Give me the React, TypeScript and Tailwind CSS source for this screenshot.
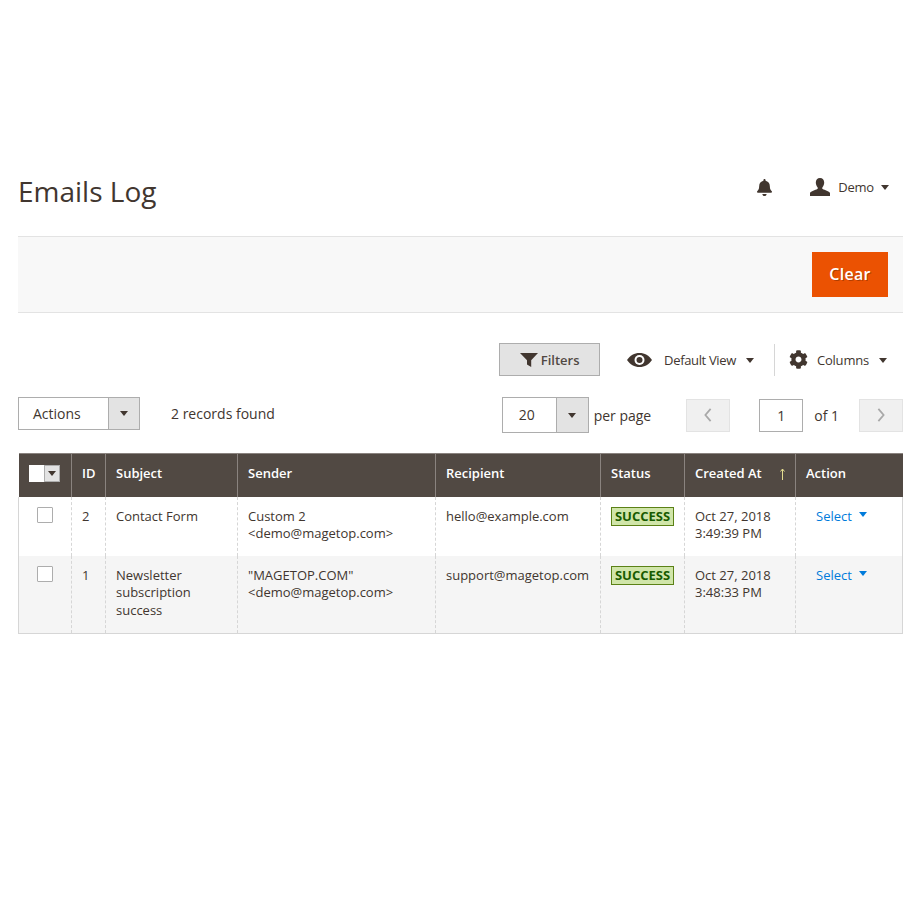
import { FaBell, FaCog } from "react-icons/fa";

type Row = {
  id: number;
  subject: string[];
  sender: string[];
  recipient: string;
  date: string;
  time: string;
  striped: boolean;
};

const rows: Row[] = [
  {
    id: 2,
    subject: ["Contact Form"],
    sender: ["Custom 2", "<demo@magetop.com>"],
    recipient: "hello@example.com",
    date: "Oct 27, 2018",
    time: "3:49:39 PM",
    striped: false,
  },
  {
    id: 1,
    subject: ["Newsletter", "subscription", "success"],
    sender: ['"MAGETOP.COM"', "<demo@magetop.com>"],
    recipient: "support@magetop.com",
    date: "Oct 27, 2018",
    time: "3:48:33 PM",
    striped: true,
  },
];

function Caret({ className }: { className: string }) {
  return (
    <svg viewBox="0 0 8 5" className={className} fill="currentColor">
      <path d="M0 0h8L4 5z" />
    </svg>
  );
}

function UserIcon() {
  return (
    <svg viewBox="0 0 20 18" className="h-[18px] w-5 text-[#41362f]" fill="currentColor">
      <path d="M10 0c2.600 0 4.200 1.900 4.200 4.600 0 1.800-.7 3.600-1.700 4.700-.4.5-.4 1.400.2 1.800 1.900 1.200 6.500 1.900 7.300 4V18H0v-2.900c.8-2.100 5.400-2.800 7.300-4 .6-.4.6-1.300.2-1.800-1-1.100-1.700-2.900-1.700-4.700C5.800 1.900 7.400 0 10 0z" />
    </svg>
  );
}

function FunnelIcon() {
  return (
    <svg viewBox="0 0 18 14" className="h-[14px] w-[18px] text-[#41362f]" fill="currentColor">
      <path d="M0 0h18l-6.800 7.200V14L7 11.500V7.200z" />
    </svg>
  );
}

function EyeIcon() {
  return (
    <svg viewBox="0 0 25 14" className="ml-[27px] h-[14px] w-[25px] text-[#41362f]">
      <path fill="currentColor" d="M0 7C3 2.600 7.300 0 12.500 0S22 2.600 25 7c-3 4.400-7.300 7-12.500 7S3 11.400 0 7z" />
      <circle cx="12.500" cy="7" r="5" fill="#fff" />
      <circle cx="12.500" cy="7" r="3" fill="currentColor" />
    </svg>
  );
}

function Pager({ dir }: { dir: "left" | "right" }) {
  return (
    <div className="flex h-[33px] w-11 items-center justify-center border border-[#e3e3e3] bg-[#f0f0f0]">
      <svg viewBox="0 0 10 16" className="h-3.5 w-2.5 text-[#a8a8a8]" fill="none" stroke="currentColor" strokeWidth="2">
        {dir === "left" ? <path d="M8 1L2 8l6 7" /> : <path d="M2 1l6 7-6 7" />}
      </svg>
    </div>
  );
}

export default function App() {
  return (
    <div className="min-h-[920px] bg-white pl-[18px] pr-[17px] pt-[175px] font-['Open_Sans',sans-serif] text-[14px] text-[#41362f]">
      {/* Header */}
      <div className="flex h-[61px] items-start justify-between">
        <h1 className="text-[28px] leading-[33px] text-[#41362f]">Emails Log</h1>
        <div className="flex items-center pr-[14px] pt-[3px]">
          <FaBell className="mr-[37px] h-[17px] w-[17px] text-[#41362f]" />
          <UserIcon />
          <span className="ml-2 text-[13px] leading-[18px] tracking-[-0.2px]">Demo</span>
          <Caret className="ml-[7px] h-[5px] w-2 text-[#41362f]" />
        </div>
      </div>

      {/* Action bar */}
      <div className="flex h-[77px] items-center justify-end border-y border-[#e3e3e3] bg-[#f8f8f8] pr-[15px]">
        <button className="flex h-[45px] w-[76px] items-center justify-center bg-[#eb5202] pb-[2px] text-[16px] font-semibold tracking-[0.3px] text-white [text-shadow:1px_1px_0_rgba(0,0,0,0.25)]">
          Clear
        </button>
      </div>

      {/* Grid controls */}
      <div className="mt-[30px] flex h-[33px] items-center justify-end pr-[16px]">
        <button className="flex h-[33px] w-[101px] items-center justify-center gap-[3px] border border-[#adadad] bg-[#e3e3e3] text-[13px] font-semibold text-[#514943]">
          <FunnelIcon />
          <span className="pt-[2px]">Filters</span>
        </button>
        <EyeIcon />
        <span className="ml-[12px] pt-[2px] text-[13px] tracking-[-0.35px]">Default View</span>
        <Caret className="ml-[10px] mt-[1px] h-[5px] w-2 text-[#41362f]" />
        <div className="ml-[20px] h-8 w-px bg-[#d6d6d6]" />
        <FaCog className="ml-[14px] h-[19px] w-[19px] text-[#41362f]" />
        <span className="ml-[9px] pt-[2px] text-[13px] tracking-[-0.2px]">Columns</span>
        <Caret className="ml-[10px] mt-[1px] h-[5px] w-2 text-[#41362f]" />
      </div>

      <div className="mt-[21px] flex h-[36px] items-center">
        <div className="mb-[3px] flex h-[33px] w-[122px] border border-[#adadad]">
          <span className="flex-1 pl-[14px] leading-[31px]">Actions</span>
          <span className="flex w-[31px] items-center justify-center border-l border-[#adadad] bg-[#e3e3e3]">
            <Caret className="h-[5px] w-2 text-[#41362f]" />
          </span>
        </div>
        <span className="mb-[3px] ml-[31px]">2 records found</span>
        <div className="ml-auto flex h-[36px] w-[87px] border border-[#adadad]">
          <span className="flex-1 pl-4 leading-[34px]">20</span>
          <span className="flex w-8 items-center justify-center border-l border-[#adadad] bg-[#e3e3e3]">
            <Caret className="h-[5px] w-2 text-[#41362f]" />
          </span>
        </div>
        <span className="ml-[5px] mr-[35px]">per page</span>
        <Pager dir="left" />
        <div className="ml-[29px] flex h-[33px] w-[44px] items-center justify-center border border-[#adadad]">1</div>
        <span className="ml-[11px] mr-[20px]">of 1</span>
        <Pager dir="right" />
      </div>

      {/* Table */}
      <table className="mt-[20px] w-[884px] table-fixed border-collapse text-[13px]">
        <colgroup>
          <col className="w-[53px]" />
          <col className="w-[34px]" />
          <col className="w-[132px]" />
          <col className="w-[198px]" />
          <col className="w-[165px]" />
          <col className="w-[84px]" />
          <col className="w-[111px]" />
          <col className="w-[107px]" />
        </colgroup>
        <thead>
          <tr className="h-[43px] border-t border-[#8a837f] bg-[#514943] text-left text-white">
            <th className="border-r border-[#8a837f] pb-[3px] pl-[10px]">
              <div className="flex h-[17px] w-[31px]">
                <span className="w-[15px] bg-white" />
                <span className="flex w-4 items-center justify-center border border-[#adadad] bg-[#e3e3e3]">
                  <Caret className="h-[5px] w-2 text-[#41362f]" />
                </span>
              </div>
            </th>
            <th className="border-r border-[#8a837f] pb-[4px] pl-[10px] font-semibold">ID</th>
            <th className="border-r border-[#8a837f] pb-[4px] pl-[10px] font-semibold">Subject</th>
            <th className="border-r border-[#8a837f] pb-[4px] pl-[10px] font-semibold">Sender</th>
            <th className="border-r border-[#8a837f] pb-[4px] pl-[10px] font-semibold">Recipient</th>
            <th className="border-r border-[#8a837f] pb-[4px] pl-[10px] font-semibold">Status</th>
            <th className="relative border-r border-[#8a837f] pb-[4px] pl-[10px] font-semibold">
              Created At
              <svg viewBox="0 0 7 12" className="absolute right-[9px] top-[14px] h-3 w-[7px] text-[#e3dc8f]" fill="none" stroke="currentColor">
                <path d="M3.500 12V1M1.500 3.500l2-2.500 2 2.500" />
              </svg>
            </th>
            <th className="pb-[4px] pl-[10px] font-semibold">Action</th>
          </tr>
        </thead>
        <tbody>
          {rows.map((row) => (
            <tr
              key={row.id}
              className={row.striped ? "h-[78px] border-b border-[#d6d6d6] bg-[#f5f5f5]" : "h-[59px] bg-white"}
            >
              <td className="border-x border-x-[#d6d6d6] pl-[18px] pt-[10px] align-top [border-left-style:solid] [border-right-style:dashed]">
                <span className="block h-4 w-4 rounded-[1px] border border-[#adadad] bg-white" />
              </td>
              <td className="border-r border-dashed border-[#d6d6d6] pl-[10px] pt-[11px] align-top leading-[17.5px]">{row.id}</td>
              <td className="border-r border-dashed border-[#d6d6d6] pl-[10px] pt-[11px] align-top leading-[17.5px]">
                {row.subject.map((line) => (
                  <div key={line}>{line}</div>
                ))}
              </td>
              <td className="border-r border-dashed border-[#d6d6d6] pl-[10px] pt-[11px] align-top leading-[17.5px]">
                {row.sender.map((line) => (
                  <div key={line}>{line}</div>
                ))}
              </td>
              <td className="border-r border-dashed border-[#d6d6d6] pl-[10px] pt-[11px] align-top leading-[17.5px]">{row.recipient}</td>
              <td className="border-r border-dashed border-[#d6d6d6] pl-[10px] pt-[10px] align-top">
                <span className="block h-[19px] w-[63px] border border-[#5b8116] bg-[#d0e5a9] text-center text-[13px] font-bold leading-[16px] text-[#185b00]">
                  SUCCESS
                </span>
              </td>
              <td className="border-r border-dashed border-[#d6d6d6] pl-[10px] pt-[11px] align-top leading-[17.5px]">
                <div>{row.date}</div>
                <div>{row.time}</div>
              </td>
              <td className="border-r border-[#d6d6d6] pl-[20px] pt-[11px] align-top leading-[17.5px]">
                <div className="flex items-center text-[#007bdb]">
                  Select
                  <Caret className="mb-[3px] ml-[7px] h-[5px] w-2 text-[#007bdb]" />
                </div>
              </td>
            </tr>
          ))}
        </tbody>
      </table>
    </div>
  );
}
